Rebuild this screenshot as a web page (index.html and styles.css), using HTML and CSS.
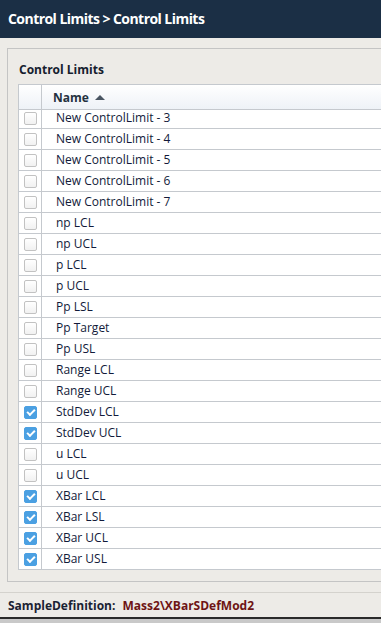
FILE: index.html
```html
<!DOCTYPE html>
<html lang="en">
<head>
    <meta charset="UTF-8" />
    <meta name="viewport" content="width=device-width, initial-scale=1" />
    <title>Control Limits</title>
    <link rel="stylesheet" href="styles.css">
</head>
<body>
<div class="topbar">Control Limits &gt; Control Limits</div>

<div class="content">
    <div class="panel">
        <div class="panel-title">Control Limits</div>
        <div class="grid">
            <div class="grid-head">
                <div class="cell-check"></div>
                <div class="cell-name">Name <span class="sort-arrow"></span></div>
            </div>
            <div class="grid-body">
                <div class="rows">
                    <div class="row"><div class="cell-check"><span class="box"></span></div><div class="cell-name">New ControlLimit - 3</div></div>
                    <div class="row"><div class="cell-check"><span class="box"></span></div><div class="cell-name">New ControlLimit - 4</div></div>
                    <div class="row"><div class="cell-check"><span class="box"></span></div><div class="cell-name">New ControlLimit - 5</div></div>
                    <div class="row"><div class="cell-check"><span class="box"></span></div><div class="cell-name">New ControlLimit - 6</div></div>
                    <div class="row"><div class="cell-check"><span class="box"></span></div><div class="cell-name">New ControlLimit - 7</div></div>
                    <div class="row"><div class="cell-check"><span class="box"></span></div><div class="cell-name">np LCL</div></div>
                    <div class="row"><div class="cell-check"><span class="box"></span></div><div class="cell-name">np UCL</div></div>
                    <div class="row"><div class="cell-check"><span class="box"></span></div><div class="cell-name">p LCL</div></div>
                    <div class="row"><div class="cell-check"><span class="box"></span></div><div class="cell-name">p UCL</div></div>
                    <div class="row"><div class="cell-check"><span class="box"></span></div><div class="cell-name">Pp LSL</div></div>
                    <div class="row"><div class="cell-check"><span class="box"></span></div><div class="cell-name">Pp Target</div></div>
                    <div class="row"><div class="cell-check"><span class="box"></span></div><div class="cell-name">Pp USL</div></div>
                    <div class="row"><div class="cell-check"><span class="box"></span></div><div class="cell-name">Range LCL</div></div>
                    <div class="row"><div class="cell-check"><span class="box"></span></div><div class="cell-name">Range UCL</div></div>
                    <div class="row"><div class="cell-check"><span class="box checked"></span></div><div class="cell-name">StdDev LCL</div></div>
                    <div class="row"><div class="cell-check"><span class="box checked"></span></div><div class="cell-name">StdDev UCL</div></div>
                    <div class="row"><div class="cell-check"><span class="box"></span></div><div class="cell-name">u LCL</div></div>
                    <div class="row"><div class="cell-check"><span class="box"></span></div><div class="cell-name">u UCL</div></div>
                    <div class="row"><div class="cell-check"><span class="box checked"></span></div><div class="cell-name">XBar LCL</div></div>
                    <div class="row"><div class="cell-check"><span class="box checked"></span></div><div class="cell-name">XBar LSL</div></div>
                    <div class="row"><div class="cell-check"><span class="box checked"></span></div><div class="cell-name">XBar UCL</div></div>
                    <div class="row"><div class="cell-check"><span class="box checked"></span></div><div class="cell-name">XBar USL</div></div>
                </div>
            </div>
        </div>
    </div>
</div>

<div class="footer">
    <span class="footer-label">SampleDefinition:</span>
    <span class="footer-value">Mass2\XBarSDefMod2</span>
</div>
<div class="bottom-strip"></div>
</body>
</html>
```

FILE: styles.css
```css
html, body {
    margin: 0;
    padding: 0;
}
body {
    font-family: "Open Sans", "Noto Sans", sans-serif;
    background-color: #edebe7;
    color: #1a1a2e;
    width: 381px;
    height: 623px;
    overflow: hidden;
}
.topbar {
    height: 38px;
    line-height: 37px;
    padding-left: 8px;
    background-color: #1b2f45;
    color: #ffffff;
    font-weight: bold;
    font-size: 14px;
    letter-spacing: -0.55px;
}
.content {
    padding: 10px 0 0 7px;
    height: 544px;
    box-sizing: border-box;
}
.panel {
    height: 534px;
    box-sizing: border-box;
    border: 1px solid #c4c4c4;
    border-right: none;
    padding: 0 0 0 10px;
}
.panel-title {
    height: 35px;
    line-height: 42px;
    font-size: 12px;
    font-weight: bold;
    color: #15202e;
    padding-left: 1px;
}
.grid {
    border-top: 1px solid #c5c9ce;
    border-left: 1px solid #c5c9ce;
    background-color: #ffffff;
}
.grid-head {
    display: flex;
    height: 24px;
    border-bottom: 1px solid #c5c9ce;
    background: linear-gradient(#ffffff, #eef2f7);
}
.grid-head .cell-name {
    font-weight: bold;
    font-size: 12px;
    line-height: 25px;
    padding-left: 11px;
    color: #24313f;
}
.sort-arrow {
    display: inline-block;
    width: 0;
    height: 0;
    margin-left: 3px;
    vertical-align: 2px;
    border-left: 5px solid transparent;
    border-right: 5px solid transparent;
    border-bottom: 5px solid #4a5562;
}
.cell-check {
    width: 22px;
    flex: none;
    border-right: 1px solid #c5c9ce;
    display: flex;
    align-items: center;
    justify-content: center;
}
.cell-name {
    flex: 1;
}
.grid-body {
    height: 460px;
    overflow: hidden;
}
.rows {
    margin-top: -2px;
}
.row {
    display: flex;
    height: 20px;
    border-bottom: 1px solid #c5c9ce;
}
.row .cell-name {
    font-size: 12px;
    line-height: 20px;
    padding-left: 14px;
    color: #121a3a;
}
.box {
    width: 11px;
    height: 11px;
    border: 1px solid #c2c2c2;
    border-radius: 2px;
    background: linear-gradient(#ffffff, #f1f1f1);
    margin-left: 1px;
    position: relative;
}
.box.checked {
    border-color: #4ba0e2;
    background: #4ba0e2;
}
.box.checked::after {
    content: "";
    position: absolute;
    left: 2px;
    top: 2px;
    width: 6px;
    height: 3px;
    border-left: 2px solid #ffffff;
    border-bottom: 2px solid #ffffff;
    transform: rotate(-45deg);
}
.footer {
    margin-top: 10px;
    border-top: 1px solid #d4d2cd;
    height: 24px;
    line-height: 25px;
    padding-left: 8px;
    font-size: 12px;
    font-weight: bold;
}
.footer-label {
    color: #1a2233;
}
.footer-value {
    margin-left: 4px;
    color: #6e1414;
}
.bottom-strip {
    border-top: 2px solid #2a2a2a;
    height: 6px;
    background-color: #c9c9c9;
}
```
